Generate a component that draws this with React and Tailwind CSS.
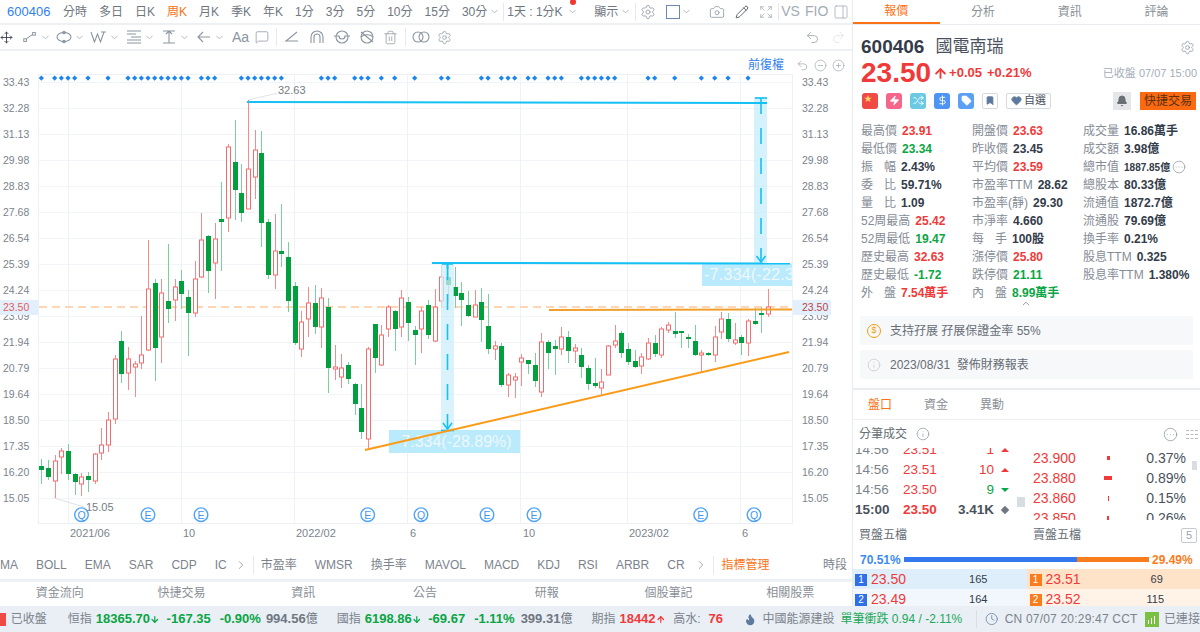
import React from "react";
import {
  ArrowDown, ArrowUp, Bell, Bookmark, Camera, ChevronDown, ChevronRight, ChevronUp, CircleEllipsis, CircleMinus,
  CirclePlus, Clock, DollarSign, Expand, Flame, Heart, Info, Move, MessageSquare, PanelRight, Pencil, Redo2, Settings, Shuffle, Tag, Trash2, Undo2, Zap,
} from "lucide-react";

// [type, high, bodyTop, bodyBottom, low] in page pixels
const candles = [
  ["g",459,466,470,484],["g",460,468,477,480],["r",455,461,481,498],["r",448,451,457,474],["g",444,451,474,480],
  ["g",473,474,482,495],["r",473,477,484,496],["g",472,476,480,492],["r",453,454,481,484],["r",428,445,453,460],
  ["r",412,420,445,452],["r",355,359,419,424],["g",331,341,374,383],["r",347,359,373,390],["r",361,364,367,397],
  ["r",316,355,363,369],["r",240,289,350,351],["g",279,283,348,381],["r",279,293,337,363],["g",244,301,309,323],
  ["r",279,287,300,321],["g",270,281,294,309],["g",290,297,313,356],["r",261,279,313,317],["r",213,240,277,278],
  ["g",235,236,271,293],["r",223,239,263,299],["g",182,219,222,271],["r",144,147,218,232],["g",120,162,190,220],
  ["g",164,193,213,222],["r",100,169,209,209],["r",130,150,177,199],["g",131,153,223,247],["g",219,222,275,279],
  ["r",214,251,275,289],["g",204,251,254,267],["g",242,257,301,312],["g",282,286,343,345],["r",311,322,349,357],
  ["r",287,303,319,337],["g",285,303,327,334],["r",288,298,327,348],["g",298,307,368,393],["r",345,367,369,380],
  ["r",354,368,377,388],["g",362,365,379,384],["g",383,384,404,415],["g",384,408,432,439],["r",347,349,439,448],
  ["g",324,324,358,373],["r",325,335,365,366],["r",305,307,329,337],["g",310,311,329,351],["r",290,298,327,337],
  ["g",297,302,323,341],["g",326,330,335,365],["r",307,311,329,353],["g",300,305,335,339],["r",289,307,341,342],
  ["r",265,277,301,307],["g",265,277,285,303],["g",267,287,296,308],["g",282,293,300,326],["g",291,305,316,317],
  ["r",290,305,317,317],["g",288,302,320,342],["g",294,326,349,354],["r",341,346,349,360],["g",343,346,385,387],
  ["r",373,375,385,397],["r",373,377,380,398],["r",354,358,362,386],["g",360,360,364,374],["g",353,365,381,387],
  ["r",333,342,392,397],["g",340,342,353,369],["g",340,346,349,375],["r",327,337,349,355],["g",331,337,351,363],
  ["r",344,348,351,363],["g",348,355,367,378],["g",365,368,384,390],["g",358,383,386,388],["r",369,382,388,394],
  ["r",345,346,375,375],["r",325,341,345,348],["g",331,333,353,358],["g",343,349,362,365],["g",350,361,367,368],
  ["r",353,357,366,374],["r",338,343,359,360],["g",335,343,354,357],["r",327,329,355,358],["r",322,325,330,333],
  ["g",312,331,334,338],["g",331,331,333,348],["g",334,337,339,348],["g",325,341,355,356],["r",350,353,355,372],
  ["g",352,353,355,356],["r",326,337,355,362],["r",312,319,332,339],["g",313,319,339,342],["r",323,340,343,345],
  ["g",335,337,343,355],["r",319,321,343,356],["g",308,321,324,325],["g",307,313,315,333],["r",289,307,314,317],
];

const axis = ["33.43","32.28","31.13","29.98","28.83","27.68","26.54","25.39","24.24","23.09","21.94","20.79","19.64","18.50","17.35","16.20","15.05"];
const dots = [0,2,3,4,5,7,10,13,14,15,16,17,18,19,20,21,22,24,25,26,30,31,32,33,34,35,36,42,43,44,47,48,49,51,53,56,60,61,66,67,69,70,71,73,74,76,77,78,81,82,83,84,85,86,91,92,95,99,101,103,106];
const events = [[81.5,"Q"],[148,"E"],[201,"E"],[367.7,"E"],[421,"Q"],[487,"E"],[534,"E"],[700.7,"E"],[754,"Q"]];
const vlines = [68.5,181.5,294.5,407.5,520.5,627.5,740.5];
const xlabels = [[70,"2021/06"],[183,"10"],[296,"2022/02"],[410,"6"],[523,"10"],[629,"2023/02"],[742,"6"]];

const RED = "text-[#f03a3a]";
const GREEN = "text-[#0aa544]";
const DARK = "text-[#333c4a]";

const quote = [
  [
    ["最高價","23.91",RED],["最低價","23.34",GREEN],["振|幅","2.43%",DARK],["委|比","59.71%",DARK],["量|比","1.09",DARK],
    ["52周最高","25.42",RED],["52周最低","19.47",GREEN],["歷史最高","32.63",RED],["歷史最低","-1.72",GREEN],["外|盤","7.54萬手",RED],
  ],
  [
    ["開盤價","23.63",RED],["昨收價","23.45",DARK],["平均價","23.59",RED],["市盈率TTM","28.62",DARK],["市盈率(靜)","29.30",DARK],
    ["市淨率","4.660",DARK],["每|手","100股",DARK],["漲停價","25.80",RED],["跌停價","21.11",GREEN],["內|盤","8.99萬手",GREEN],
  ],
  [
    ["成交量","16.86萬手",DARK],["成交額","3.98億",DARK],["總市值","1887.85億",DARK],["總股本","80.33億",DARK],["流通值","1872.7億",DARK],
    ["流通股","79.69億",DARK],["換手率","0.21%",DARK],["股息TTM","0.325",DARK],["股息率TTM","1.380%",DARK],
  ],
];

const ticks = [
  ["14:56","23.51","1","u"],["14:56","23.51","10","u"],["14:56","23.50","9","d"],["15:00","23.50","3.41K","n"],
];
const depth = [
  ["23.900","0.37%","w-[3px] bg-[#f03a3a] h-[4px]"],["23.880","0.89%","w-[8px] bg-[#f03a3a] h-[4px]"],
  ["23.860","0.15%","w-[1px] bg-[#f03a3a] h-[5px]"],["23.850","0.26%","w-[2px] bg-[#f03a3a] h-[5px]"],
];

const Glyph = ({ children, w = 18 }) => (
  <svg width={w} height="16" viewBox="0 0 18 16" fill="none" stroke="#8b95a1" strokeWidth="1.1">{children}</svg>
);

const Chev = () => <ChevronDown className="w-[11px] h-[11px] text-[#9aa3ad]" strokeWidth={1.6} />;

const Candles = () =>
  candles.map(([t, h, top, bot, l], i) => {
    const x = Math.round(41.33 + i * 6.667) + 0.5;
    const red = t === "r";
    return (
      <g key={i}>
        <line x1={x} x2={x} y1={h} y2={l} stroke={red ? "#f78b8b" : "#79d09c"} />
        {red ? (
          <rect x={x - 2} y={top} width="4" height={Math.max(bot - top, 2)} fill="#fff" stroke="#f56b6b" />
        ) : (
          <rect x={x - 2.5} y={top} width="5" height={Math.max(bot - top, 2)} fill="#029f3e" />
        )}
      </g>
    );
  });

const Chart = () => (
  <svg width="852" height="500" viewBox="0 51 852 500" className="block">
    {axis.map((a, i) => (
      <line key={a} x1="39" x2="792" y1={82.5 + i * 26} y2={82.5 + i * 26} stroke="#f1f4f8" />
    ))}
    {vlines.map((x) => (
      <line key={x} x1={x} x2={x} y1="75" y2="523" stroke="#edf2f7" />
    ))}
    <rect x="38.5" y="74.5" width="754" height="449" fill="none" stroke="#edf1f5" />
    {axis.map((a, i) => (
      <g key={a} fill="#7c838c" fontSize="10.5">
        <text x="3" y={86 + i * 26}>{a}</text>
        <text x="802" y={86 + i * 26}>{a}</text>
      </g>
    ))}
    {dots.map((i) => {
      const x = 41.33 + i * 6.667;
      return <path key={i} d={`M${x} 75.5l2.6 2.6-2.6 2.6-2.6-2.6z`} fill="#1a84f0" />;
    })}

    <rect x="0" y="300" width="38" height="15" fill="#e2f0fd" />
    <rect x="793" y="300" width="38" height="15" fill="#e2f0fd" />
    <text x="3" y="311" fill="#e85a5a" fontSize="10.5">23.50</text>
    <text x="802" y="311" fill="#c0443f" fontSize="10.5">23.50</text>
    <line x1="39" x2="792" y1="307" y2="307" stroke="#ffc79c" strokeWidth="1.3" strokeDasharray="8 5" />

    <line x1="248" y1="100" x2="278" y2="93" stroke="#dfe3e8" />
    <line x1="54" y1="498" x2="84" y2="507" stroke="#dfe3e8" />

    <Candles />

    <text x="278" y="94" fill="#757c85" fontSize="11">32.63</text>
    <text x="86" y="511" fill="#757c85" fontSize="11">15.05</text>

    {/* measure bands */}
    <rect x="754" y="97" width="13" height="166" fill="#cdeefb" opacity="0.85" />
    <rect x="441" y="263" width="13" height="168" fill="#cdeefb" opacity="0.75" />
    <rect x="702" y="264" width="90" height="22" fill="#b9ebfc" />
    <rect x="389" y="430" width="131" height="23" fill="#b9ebfc" />
    <text x="704" y="280" fill="#eef7fb" fontSize="16.5">-7.334(-22.3</text>
    <text x="396" y="447" fill="#eef7fb" fontSize="16">-7.334(-28.89%)</text>

    <g stroke="#14c0f4" strokeWidth="1.6" fill="none">
      <line x1="247" y1="102" x2="767" y2="103" strokeWidth="2" />
      <line x1="432" y1="263" x2="790" y2="263.5" strokeWidth="2" />
      <line x1="755" y1="98" x2="767" y2="98" />
      <line x1="761" y1="98" x2="761" y2="261" strokeDasharray="16 14" />
      <path d="M756.5 256l4.5 6 4.5-6" />
      <line x1="447.5" y1="264" x2="447.5" y2="429" strokeDasharray="16 14" />
      <path d="M443 423l4.5 6 4.5-6" />
      <line x1="441" y1="430.5" x2="454" y2="430.5" />
      <path d="M442 264h11M447.5 264v5" />
    </g>
    <line x1="365" y1="450" x2="789" y2="352" stroke="#fa9a16" strokeWidth="1.9" />
    <line x1="549" y1="310" x2="792" y2="309.5" stroke="#f0a02a" strokeWidth="1.9" />

    {events.map(([x, c], i) => (
      <g key={i}>
        <circle cx={x} cy="514.7" r="6.8" fill="#fff" stroke="#4ea4fb" strokeWidth="1.4" />
        <text x={x} y="518.5" textAnchor="middle" fontSize="10.5" fill="#3f96f0">{c}</text>
      </g>
    ))}
    {xlabels.map(([x, t]) => (
      <text key={x} x={x} y="537" fill="#7c838c" fontSize="11">{t}</text>
    ))}
  </svg>
);

const TopBar = () => (
  <div className="h-[23px] flex items-center text-[12px] text-[#6f7680] border-b-2 border-[#eef1f4] box-content relative whitespace-nowrap">
    <span className="ml-[7px] text-[13px] text-[#2f7ff0] w-[44px] shrink-0">600406</span>
    <div className="ml-[12px] flex gap-[12px] shrink-0">
      <span>分時</span>
      <span>多日</span>
      <span>日K</span>
      <span className="text-[#f97316]">周K</span>
      <span>月K</span>
      <span>季K</span>
      <span>年K</span>
      <span>1分</span>
      <span>3分</span>
      <span>5分</span>
      <span>10分</span>
      <span>15分</span>
      <span>30分</span>
    </div>
    <span className="ml-[2px]"><Chev /></span>
    <span className="ml-[3px] h-[18px] border-l border-[#e6e9ed]" />
    <span className="ml-[3px] w-[58px] shrink-0">1天 : 1分K</span>
    <span className="relative ml-[2px]">
      <Chev />
      <span className="absolute left-[3px] -top-[7px] w-[6px] h-[6px] rounded-full bg-[#f0362f]" />
    </span>
    <span className="ml-[16px]">顯示</span>
    <span className="ml-[2px]"><Chev /></span>
    <span className="ml-[4px] h-[18px] border-l border-[#e6e9ed]" />
    <Settings className="ml-[4px] w-[16px] h-[16px] text-[#8b95a1] shrink-0" strokeWidth={1.2} />
    <span className="ml-[10px] w-[14px] h-[14px] border border-[#6d88ad] shrink-0" />
    <span className="ml-[1px]"><Chev /></span>
    <Camera className="ml-[17px] w-[16px] h-[16px] text-[#8b95a1] shrink-0" strokeWidth={1.2} />
    <Pencil className="ml-[10px] w-[14px] h-[14px] text-[#3d4550] shrink-0" strokeWidth={1.4} />
    <Expand className="ml-[10px] w-[14px] h-[14px] text-[#9aa3ad] shrink-0" strokeWidth={1.2} />
    <span className="ml-[5px] h-[18px] border-l border-[#e6e9ed]" />
    <span className="ml-[2px] text-[14px] text-[#a3abb5]">VS</span>
    <span className="ml-[5px] text-[14px] text-[#a3abb5]">FIO</span>
    <PanelRight className="ml-[5px] w-[16px] h-[16px] text-[#a3abb5] shrink-0" strokeWidth={1.2} />
  </div>
);

const DrawBar = () => (
  <div className="h-[24px] flex items-center border-b-2 border-[#eef1f4] box-content">
    <Move className="w-[13px] h-[13px] text-[#333c4a]" strokeWidth={1.6} />
    <span className="ml-[9px] flex items-center gap-[2px]">
      <Glyph w={16}><rect x="2" y="10" width="3" height="3" /><rect x="12" y="3" width="3" height="3" /><path d="M5 10l7-5" /></Glyph>
      <Chev />
    </span>
    <span className="ml-[4px] flex items-center gap-[1px]">
      <Glyph><ellipse cx="9" cy="8" rx="7" ry="4.5" /><circle cx="9" cy="3.5" r="1.3" /><circle cx="9" cy="12.5" r="1.3" /></Glyph>
      <Chev />
    </span>
    <span className="ml-[5px] flex items-center gap-[1px]">
      <Glyph><path d="M1 3l3.5 10 3-8 3 8L14 3M4.5 13L1 3M11 3h5" /></Glyph>
      <Chev />
    </span>
    <span className="ml-[5px] flex items-center gap-[1px]">
      <Glyph><path d="M2 2h14M2 5h9M6 8h10M2 11h14M2 14h14" /></Glyph>
      <Chev />
    </span>
    <span className="ml-[5px] flex items-center gap-[1px]">
      <Glyph><path d="M3 2h12M9 2v12M3 14h12M6 5l3-3 3 3" /></Glyph>
      <Chev />
    </span>
    <span className="ml-[5px] flex items-center gap-[1px]">
      <Glyph><path d="M15 8H3M8 3L3 8l5 5" /></Glyph>
      <Chev />
    </span>
    <span className="ml-[7px] text-[14px] text-[#8b95a1]">Aa</span>
    <MessageSquare className="ml-[6px] w-[14px] h-[14px] text-[#8b95a1]" strokeWidth={1.3} />
    <span className="ml-[7px] h-[18px] border-l border-[#e6e9ed]" />
    <span className="ml-[6px]"><Glyph><path d="M14 3L3 12h12" /></Glyph></span>
    <span className="ml-[7px]"><Glyph><path d="M3 14V8a6 6 0 0 1 12 0v6M6 14V8a3 3 0 0 1 6 0v6" /></Glyph></span>
    <span className="ml-[7px]"><Glyph><circle cx="9" cy="8" r="6" /><path d="M1 7h5a3 3 0 0 0 6 0h5" /></Glyph></span>
    <span className="ml-[7px]"><Glyph><circle cx="9" cy="8" r="6" /><path d="M3 3l12 10M3 8c3-3 9-3 12 0" /></Glyph></span>
    <Trash2 className="ml-[7px] w-[15px] h-[15px] text-[#8b95a1]" strokeWidth={1.2} />
    <span className="ml-[7px] h-[18px] border-l border-[#e6e9ed]" />
    <span className="ml-[6px]"><Glyph><circle cx="6" cy="8" r="5" /><circle cx="12" cy="8" r="5" /></Glyph></span>
    <Settings className="ml-[7px] w-[15px] h-[15px] text-[#8b95a1]" strokeWidth={1.2} />
    <Undo2 className="ml-[353px] w-[15px] h-[15px] text-[#9aa3ad]" strokeWidth={1.3} />
    <Redo2 className="ml-[11px] w-[15px] h-[15px] text-[#dfe3e8]" strokeWidth={1.3} />
  </div>
);

const IndicatorBar = () => (
  <div className="h-[28px] flex items-center text-[12px] text-[#7c838c] border-b-[3px] border-[#eef1f4] box-content overflow-hidden whitespace-nowrap">
    <div className="flex gap-[18px]">
      <span>MA</span>
      <span>BOLL</span>
      <span>EMA</span>
      <span>SAR</span>
      <span>CDP</span>
      <span>IC</span>
    </div>
    <ChevronRight className="ml-[7px] w-[14px] h-[14px] text-[#8b95a1]" strokeWidth={1.4} />
    <span className="ml-[5px] h-[18px] border-l border-[#e6e9ed]" />
    <div className="ml-[7px] flex gap-[18px]">
      <span>市盈率</span>
      <span>WMSR</span>
      <span>換手率</span>
      <span>MAVOL</span>
      <span>MACD</span>
      <span>KDJ</span>
      <span>RSI</span>
      <span>ARBR</span>
      <span>CR</span>
    </div>
    <ChevronRight className="ml-[9px] w-[14px] h-[14px] text-[#8b95a1]" strokeWidth={1.4} />
    <span className="ml-[5px] h-[18px] border-l border-[#e6e9ed]" />
    <span className="ml-[8px] text-[#f97316]">指標管理</span>
    <span className="ml-auto mr-[5px]">時段</span>
  </div>
);

const Tabs = () => (
  <div className="h-[22px] grid grid-cols-7 items-center text-center text-[12px] text-[#8a8f96] -translate-x-[1px]">
    <span>資金流向</span>
    <span>快捷交易</span>
    <span>資訊</span>
    <span>公告</span>
    <span>研報</span>
    <span>個股筆記</span>
    <span>相關股票</span>
  </div>
);

const QuoteColumn = ({ rows, width }) => (
  <div className={`flex flex-col ${width}`}>
    {rows.map(([label, value, color]) => {
      const pair = label.split("|");
      const small = value === "1887.85億";
      return (
        <div key={label} className="h-[18px] flex items-center gap-[5px] whitespace-nowrap">
          {pair.length > 1 ? (
            <span className="w-[35px] flex justify-between text-[#858c96]">
              <span>{pair[0]}</span>
              <span>{pair[1]}</span>
            </span>
          ) : (
            <span className="text-[#858c96]">{label}</span>
          )}
          <span className={`font-bold ${small ? "text-[10px]" : ""} ${color}`}>{value}</span>
          {small && <CircleEllipsis className="w-[14px] h-[14px] -ml-[3px] text-[#8b95a1]" strokeWidth={1.2} />}
        </div>
      );
    })}
  </div>
);

const Badge = ({ bg, children }) => (
  <span className={`w-[16px] h-[16px] rounded-[3px] flex items-center justify-center text-white ${bg}`}>{children}</span>
);

const Sidebar = () => (
  <div className="w-[348px] h-[606px] border-l border-[#e8ecf0] overflow-hidden flex flex-col">
    <div className="h-[24px] grid grid-cols-4 text-[12px] text-[#8a8f96] text-center items-center border-b border-[#e8ecf0] box-content shrink-0">
      <span className="h-[24px] leading-[22px] text-[#f97316] border-b-2 border-[#f97316]">報價</span>
      <span>分析</span>
      <span>資訊</span>
      <span>評論</span>
    </div>

    <div className="h-[20px] mt-[12px] pl-[8px] pr-[5px] flex items-center shrink-0">
      <span className="text-[19px] font-bold text-[#333c4a]">600406</span>
      <span className="ml-[11px] text-[17px] text-[#4a515c]">國電南瑞</span>
      <Settings className="ml-auto w-[15px] h-[15px] text-[#8b95a1]" strokeWidth={1.2} />
    </div>

    <div className="h-[30px] mt-[1px] pl-[8px] pr-[3px] flex items-center shrink-0">
      <span className={`text-[28px] font-bold ${RED}`}>23.50</span>
      <ArrowUp className={`ml-[2px] w-[15px] h-[17px] ${RED}`} strokeWidth={3} />
      <span className={`ml-[1px] text-[13px] font-bold ${RED}`}>+0.05</span>
      <span className={`ml-[5px] text-[13px] font-bold ${RED}`}>+0.21%</span>
      <span className="ml-auto text-[11px] text-[#a5adb8] whitespace-nowrap">已收盤 07/07 15:00</span>
    </div>

    <div className="h-[19px] mt-[3px] pl-[9px] pr-[4px] flex items-center gap-[8px] shrink-0">
      <Badge bg="bg-[#f04a45]"><span className="text-[#ffd76a] text-[8px] leading-none -mt-[4px] -ml-[4px]">★</span></Badge>
      <Badge bg="bg-[#f4668a]"><Zap className="w-[11px] h-[11px] fill-white" strokeWidth={1} /></Badge>
      <Badge bg="bg-[#6cc9e4]"><Shuffle className="w-[11px] h-[11px]" strokeWidth={2} /></Badge>
      <Badge bg="bg-[#4d94f5]"><DollarSign className="w-[11px] h-[11px]" strokeWidth={2} /></Badge>
      <Badge bg="bg-[#5ba0f5]"><Tag className="w-[11px] h-[11px] fill-white" strokeWidth={1} /></Badge>
      <span className="w-[16px] h-[16px] rounded-[2px] border border-[#d5dae1] flex items-center justify-center">
        <Bookmark className="w-[10px] h-[11px] text-[#5d7a9e] fill-[#5d7a9e]" />
      </span>
      <span className="h-[16px] w-[45px] rounded-[2px] border border-[#d5dae1] flex items-center justify-center gap-[2px] text-[11px] text-[#4a515c]">
        <Heart className="w-[11px] h-[11px] text-[#5d7a9e] fill-[#5d7a9e]" />
        自選
      </span>
      <span className="ml-auto w-[18px] h-[18px] bg-[#e4e6e9] flex items-center justify-center">
        <Bell className="w-[12px] h-[12px] text-[#6a6f76] fill-[#6a6f76]" />
      </span>
      <span className="ml-[1px] w-[56px] h-[18px] bg-[#fb6a10] text-[12px] text-[#5a3010] text-center leading-[18px]">快捷交易</span>
    </div>

    <div className="mt-[12px] pl-[8px] flex text-[12px] relative shrink-0">
      <QuoteColumn rows={quote[0]} width="w-[111px]" />
      <QuoteColumn rows={quote[1]} width="w-[111px]" />
      <QuoteColumn rows={quote[2]} width="w-[117px]" />
      <ChevronUp className="absolute left-[166px] -bottom-[7px] w-[14px] h-[11px] text-[#6f7680]" strokeWidth={1.6} />
    </div>

    <div className="mt-[14px] mx-[7px] h-[29px] rounded-[2px] bg-[#f7f8f9] flex items-center pl-[7px] text-[12px] text-[#666d76] shrink-0">
      <span className="w-[14px] h-[14px] rounded-full border-[1.5px] border-[#f59e0b] text-[#f59e0b] text-[9px] leading-[11px] text-center">$</span>
      <span className="ml-[9px]">支持孖展 孖展保證金率 55%</span>
    </div>
    <div className="mt-[5px] mx-[7px] h-[29px] rounded-[2px] bg-[#f7f8f9] flex items-center pl-[7px] text-[12px] text-[#666d76] shrink-0">
      <Info className="w-[14px] h-[14px] text-[#c2c7cd]" strokeWidth={1.2} />
      <span className="ml-[9px]">2023/08/31&nbsp; 發佈財務報表</span>
    </div>

    <div className="mt-[9px] h-[2px] bg-[#e9ecf0] shrink-0" />
    <div className="h-[29px] flex items-center pl-[15px] gap-[32px] text-[12px] text-[#8a8f96] border-b border-[#eceff3] box-content shrink-0">
      <span className="text-[#f97316]">盤口</span>
      <span>資金</span>
      <span>異動</span>
    </div>

    <div className="h-[28px] pl-[6px] pr-[2px] flex items-center text-[12px] text-[#666d76] shrink-0">
      <span>分筆成交</span>
      <Info className="ml-[9px] w-[14px] h-[14px] text-[#8b95a1]" strokeWidth={1.2} />
      <CircleEllipsis className="ml-auto w-[15px] h-[15px] text-[#8b95a1]" strokeWidth={1.2} />
      <span className="ml-[8px] w-[12px] flex flex-col gap-[3px]">
        <span className="border-t border-dashed border-[#b5bcc5]" />
        <span className="border-t border-dashed border-[#b5bcc5]" />
        <span className="border-t border-dashed border-[#b5bcc5]" />
      </span>
    </div>

    <div className="h-[72px] overflow-hidden flex shrink-0 relative">
      <div className="w-[180px] -mt-[8px] flex flex-col text-[13.5px]">
        {ticks.map(([t, p, q, dir], i) => {
          const last = dir === "n";
          return (
            <div key={i} className={`h-[20px] flex items-center shrink-0 ${last ? "font-bold" : ""}`}>
              <span className={`ml-[2px] w-[48px] ${last ? "text-[#4a515c]" : "text-[#7c838c]"}`}>{t}</span>
              <span className={`w-[50px] ${RED}`}>{p}</span>
              <span className={`w-[41px] text-right ${last ? "text-[#4a515c]" : dir === "d" ? GREEN : RED}`}>{q}</span>
              <span className="ml-[7px]">
                {dir === "u" && <span className="block w-0 h-0 border-x-[4px] border-x-transparent border-b-[4px] border-b-[#f03a3a]" />}
                {dir === "d" && <span className="block w-0 h-0 border-x-[4px] border-x-transparent border-t-[4px] border-t-[#0aa544]" />}
                {dir === "n" && <span className="block w-[6px] h-[6px] ml-[1px] rotate-45 bg-[#6f7680]" />}
              </span>
            </div>
          );
        })}
      </div>
      <div className="flex-1 flex flex-col text-[14px]">
        {depth.map(([p, pct, bar]) => (
          <div key={p} className="h-[20px] flex items-center shrink-0">
            <span className={`w-[71px] ${RED}`}>{p}</span>
            <span className="w-[8px] flex justify-center"><span className={bar} /></span>
            <span className="w-[74px] text-right text-[#4a515c]">{pct}</span>
          </div>
        ))}
      </div>
      <span className="absolute left-[164px] top-[49px] w-[8px] h-[10px] bg-[#d8dde4]" />
      <span className="absolute right-[3px] top-[13px] w-[5px] h-[9px] bg-[#d8dde4]" />
    </div>

    <div className="h-[86px] shrink-0 bg-white relative">
      <div className="h-[30px] flex items-center pl-[6px] text-[12px] text-[#666d76]">
        <span className="w-[174px]">買盤五檔</span>
        <span>賣盤五檔</span>
        <span className="ml-auto mr-[3px] w-[16px] h-[15px] border border-[#c5cad1] rounded-[2px] text-[11px] text-[#9aa3ad] text-center leading-[13px]">5</span>
      </div>
      <div className="h-[19px] flex items-center pl-[7px] text-[12px] font-bold">
        <span className="w-[44px] text-[#3d8af7]">70.51%</span>
        <span className="w-[173px] h-[5px] bg-[#3478f0]" />
        <span className="w-[72px] h-[5px] bg-[#f97d1c]" />
        <span className="ml-[3px] text-[#f97d1c]">29.49%</span>
      </div>
      <div className="h-[20px] grid grid-cols-2 text-[14px]">
        <div className="bg-[#dfeefb] flex items-center pl-[2px]">
          <span className="w-[12px] h-[12px] bg-[#2f6fe8] text-white text-[10px] leading-[12px] text-center">1</span>
          <span className={`ml-[4px] ${RED}`}>23.50</span>
          <span className="ml-[63px] text-[11px] text-[#333c4a]">165</span>
        </div>
        <div className="bg-[#ffe3c9] flex items-center pl-[3px]">
          <span className="w-[12px] h-[12px] bg-[#f97d1c] text-white text-[10px] leading-[12px] text-center">1</span>
          <span className={`ml-[4px] ${RED}`}>23.51</span>
          <span className="ml-[70px] text-[11px] text-[#333c4a]">69</span>
        </div>
      </div>
      <div className="h-[17px] grid grid-cols-2 text-[14px]">
        <div className="bg-[#f1f7fd] flex items-center pl-[2px]">
          <span className="w-[12px] h-[12px] bg-[#2f6fe8] text-white text-[10px] leading-[12px] text-center">2</span>
          <span className={`ml-[4px] ${RED}`}>23.49</span>
          <span className="ml-[63px] text-[11px] text-[#333c4a]">164</span>
        </div>
        <div className="bg-[#fff3e8] flex items-center pl-[3px]">
          <span className="w-[12px] h-[12px] bg-[#f97d1c] text-white text-[10px] leading-[12px] text-center">2</span>
          <span className={`ml-[4px] ${RED}`}>23.52</span>
          <span className="ml-[66px] text-[11px] text-[#333c4a]">115</span>
        </div>
      </div>
    </div>
  </div>
);

const StatusBar = () => (
  <div className="h-[26px] bg-[#e9eff5] flex items-center text-[12px] text-[#7c838c] whitespace-nowrap overflow-hidden">
    <span className="w-[6px] h-[13px] bg-[#f04a45]" />
    <span className="ml-[5px]">已收盤</span>
    <span className="ml-[21px]">恒指</span>
    <span className={`ml-[4px] text-[13px] font-bold ${GREEN}`}>18365.70</span>
    <ArrowDown className={`w-[10px] h-[13px] ${GREEN}`} strokeWidth={3} />
    <span className={`ml-[7px] text-[13px] font-bold ${GREEN}`}>-167.35</span>
    <span className={`ml-[9px] text-[13px] font-bold ${GREEN}`}>-0.90%</span>
    <span className="ml-[5px] text-[13px] font-bold text-[#6f7680]">994.56<span className="text-[12px] font-normal">億</span></span>
    <span className="ml-[19px]">國指</span>
    <span className={`ml-[4px] text-[13px] font-bold ${GREEN}`}>6198.86</span>
    <ArrowDown className={`w-[10px] h-[13px] ${GREEN}`} strokeWidth={3} />
    <span className={`ml-[7px] text-[13px] font-bold ${GREEN}`}>-69.67</span>
    <span className={`ml-[9px] text-[13px] font-bold ${GREEN}`}>-1.11%</span>
    <span className="ml-[6px] text-[13px] font-bold text-[#6f7680]">399.31<span className="text-[12px] font-normal">億</span></span>
    <span className="ml-[19px]">期指</span>
    <span className={`ml-[4px] text-[13px] font-bold ${RED}`}>18442</span>
    <ArrowUp className={`w-[10px] h-[13px] ${RED}`} strokeWidth={3} />
    <span className="ml-[8px]">高水:</span>
    <span className={`ml-[8px] text-[13px] font-bold ${RED}`}>76</span>
    <Flame className="ml-[21px] w-[13px] h-[15px] text-[#5d7a9e] fill-[#5d7a9e]" />
    <span className="ml-[6px]">中國能源建設</span>
    <span className="ml-[6px] text-[#22a85a]">單筆衝跌 0.94 / -2.11%</span>
    <span className="ml-[14px] h-[18px] border-l border-[#d8dee5]" />
    <Clock className="ml-[8px] w-[14px] h-[14px] text-[#5d7a9e]" strokeWidth={1.3} />
    <span className="ml-[6px] tracking-[0.2px]">CN 07/07 20:29:47 CCT</span>
    <span className="ml-[7px] w-[15px] h-[15px] bg-[#7ac143] flex items-end justify-center gap-[2px] pb-[3px]">
      <span className="w-[1px] h-[4px] bg-white" />
      <span className="w-[1px] h-[6px] bg-white" />
      <span className="w-[1px] h-[8px] bg-white" />
    </span>
    <span className="ml-[5px]">已連接</span>
  </div>
);

export default function App() {
  return (
    <div className="w-[1200px] h-[632px] overflow-hidden bg-white font-['Liberation_Sans','Noto_Sans_CJK_TC',sans-serif]">
      <div className="flex h-[606px]">
        <div className="w-[852px] shrink-0 flex flex-col">
          <TopBar />
          <DrawBar />
          <div className="h-[500px] relative shrink-0">
            <Chart />
            <div className="absolute left-[748px] top-[5px] flex items-center text-[12px] text-[#2f7ff0]">
              <span>前復權</span>
              <Undo2 className="ml-[12px] w-[13px] h-[13px] text-[#9aa3ad]" strokeWidth={1.2} />
              <CircleMinus className="ml-[5px] w-[13px] h-[13px] text-[#9aa3ad]" strokeWidth={1.2} />
              <CirclePlus className="ml-[5px] w-[13px] h-[13px] text-[#9aa3ad]" strokeWidth={1.2} />
            </div>
          </div>
          <IndicatorBar />
          <Tabs />
        </div>
        <Sidebar />
      </div>
      <StatusBar />
    </div>
  );
}
